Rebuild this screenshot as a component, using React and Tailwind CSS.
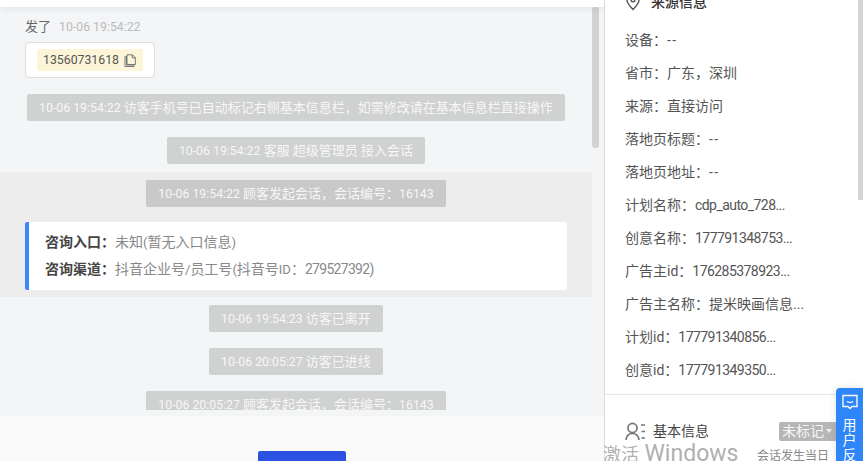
// App.jsx - chat session view with visitor source panel
const fontStack = { fontFamily: 'Roboto, "Noto Sans CJK SC", sans-serif' }

const sourceRows = [
  ['设备：', '--'],
  ['省市：', '广东，深圳'],
  ['来源：', '直接访问'],
  ['落地页标题：', '--'],
  ['落地页地址：', '--'],
  ['计划名称：', 'cdp_auto_728...'],
  ['创意名称：', '177791348753...'],
  ['广告主id：', '176285378923...'],
  ['广告主名称：', '提米映画信息...'],
  ['计划id：', '177791340856...'],
  ['创意id：', '177791349350...'],
]

// latin runs render a little narrower than the cjk text around them
function Num({ children }) {
  return <span className="text-[12.3px]">{children}</span>
}

function SystemPill({ time, children, dark }) {
  return (
    <div className={`h-[27px] leading-[27px] px-3 rounded-[2px] text-[13px] text-[#f7f7f7] whitespace-nowrap ${dark ? 'bg-[#c9c9c9]' : 'bg-[#d0d1d1]'}`}>
      <Num>{time}</Num> {children}
    </div>
  )
}

function CopyIcon() {
  return (
    <svg width="13" height="13" viewBox="0 0 13 13" fill="none" stroke="#777" strokeWidth="1">
      <path d="M1 2.5h1.5V11H10v1.5H1z" />
      <path d="M3 .8h5.5l2.8 2.8V10.5H3z" />
      <path d="M8.2 1v2.8h3" />
    </svg>
  )
}

function PinIcon() {
  return (
    <svg width="14" height="18" viewBox="0 0 14 18" fill="none" stroke="#555" strokeWidth="1.4">
      <path d="M7 16.5C4 13.5 1 10.5 1 7a6 6 0 0 1 12 0c0 3.5-3 6.500-6 9.500z" />
      <circle cx="7" cy="6.800" r="2" />
    </svg>
  )
}

function UserListIcon() {
  return (
    <svg width="20" height="19" viewBox="0 0 20 19" fill="none" stroke="#777" strokeWidth="1.700">
      <circle cx="7.500" cy="6" r="4.600" />
      <path d="M1 18c.4-4 3-6.500 6.500-6.500S13.500 14 14 18" />
      <path d="M16 3h4M16.500 9.500h3.500M16.500 16h3.500" />
    </svg>
  )
}

function FeedbackIcon() {
  return (
    <svg width="16" height="16" viewBox="0 0 16 16" fill="none" stroke="#fff" strokeWidth="1.300">
      <path d="M1 1.500h14v11H10l-2 2-2-2H1z" />
      <path d="M5 7.500c1.500 1 4.500 1 6 0" />
    </svg>
  )
}

export default function App() {
  return (
    <div className="relative flex w-[863px] h-[461px] overflow-hidden bg-white" style={fontStack}>
      {/* chat column */}
      <div className="flex flex-col w-[604px] shrink-0">
        <div className="h-[7px] bg-white shadow-[0_2px_6px_rgba(0,0,0,0.08)] z-10" />
        <div className="relative h-[403px] bg-[#f4f5f7] overflow-hidden">
          <div className="w-[592px]">
            <div className="flex items-center gap-2 pl-[25px] pt-[11px] h-[28px] text-[13px] leading-[18px]">
              <span className="text-[#666]">发了</span>
              <span className="text-[#bbb]"><Num>10-06 19:54:22</Num></span>
            </div>
            <div className="ml-[25px] mt-[7px] w-[130px] h-[36px] flex items-center justify-center bg-white border border-[#ddd] rounded-[4px]">
              <div className="flex items-center gap-[5px] h-[22px] px-[6px] bg-[#fdf5d8] text-[#555]">
                <Num>13560731618</Num>
                <CopyIcon />
              </div>
            </div>
            <div className="flex flex-col items-center gap-4 mt-[16px]">
              <SystemPill time="10-06 19:54:22">访客手机号已自动标记右侧基本信息栏，如需修改请在基本信息栏直接操作</SystemPill>
              <SystemPill time="10-06 19:54:22">客服 超级管理员 接入会话</SystemPill>
            </div>
            {/* highlighted session start */}
            <div className="mt-[8px] h-[125px] bg-[#ededed] pt-[8px] flex flex-col items-center">
              <SystemPill dark time="10-06 19:54:22">顾客发起会话，会话编号：<Num>16143</Num></SystemPill>
              <div className="mt-[15px] ml-[25px] mr-[25px] self-stretch h-[68px] bg-white rounded-[2px] border-l-4 border-[#3f87f5] pl-4 pt-[7px] text-[14px] leading-[27px]">
                <div><span className="font-semibold text-[#444]">咨询入口：</span><span className="text-[#888]">未知<span className="text-[13px]">(</span>暂无入口信息<span className="text-[13px]">)</span></span></div>
                <div><span className="font-semibold text-[#444]">咨询渠道：</span><span className="text-[#888]">抖音企业号<span className="text-[13px]">/</span>员工号<span className="text-[13px]">(</span>抖音号<span className="text-[13px]">ID</span>：<span className="text-[14px] tracking-[-0.7px]">279527392)</span></span></div>
              </div>
            </div>
            <div className="flex flex-col items-center gap-4 mt-[8px]">
              <SystemPill time="10-06 19:54:23">访客已离开</SystemPill>
              <SystemPill time="10-06 20:05:27">访客已进线</SystemPill>
              <SystemPill time="10-06 20:05:27">顾客发起会话，会话编号：<Num>16143</Num></SystemPill>
            </div>
          </div>
          {/* scrollbar */}
          <div className="absolute left-[592px] top-0 w-[7px] h-[141px] bg-[#d2d2d2] rounded-[3px]" />
        </div>
        <div className="h-[6px] bg-[#f4f5f7]" />
        <div className="flex-1 bg-[#fafafb] flex justify-center pt-[35px] overflow-hidden">
          <div className="w-[88px] h-[20px] shrink-0 bg-[#2b52e3] rounded-[2px]" />
        </div>
      </div>

      {/* source panel */}
      <div className="flex-1 min-w-0 border-l border-[#ddd] overflow-hidden">
        <div className="flex items-center gap-[11px] pl-[21px] -mt-[8px] h-[20px] text-[14px] text-[#333]">
          <PinIcon />
          <span className="font-medium">来源信息</span>
        </div>
        <div className="mt-[12px] pl-[20px] text-[14px] leading-[33px] text-[#555]">
          {sourceRows.map(([label, value]) => (
            <div key={label} className="h-[33px] whitespace-nowrap">
              {label}
              <span className={value === '--' ? 'tracking-[1.5px]' : /^[\x00-\x7f]+$/.test(value) ? 'tracking-[-0.55px]' : ''}>{value}</span>
            </div>
          ))}
        </div>
        <div className="mt-[7px] w-[253px] border-t border-[#e6e6e6]" />
        <div className="flex items-center mt-[26px] pl-[20px] w-[232px] h-[20px]">
          <UserListIcon />
          <span className="ml-[8px] text-[14px] text-[#444]">基本信息</span>
          <div className="ml-auto w-[58px] h-[19px] rounded-[2px] bg-[#b6b6b6] text-[14px] leading-[19px] text-[#f5f5f5] pl-[3px] flex items-center gap-[2px] whitespace-nowrap">
            未标记
            <span className="w-0 h-0 border-x-[3.500px] border-x-transparent border-t-[4px] border-t-[#eee]" />
          </div>
        </div>
        <div className="mt-[7px] pl-[152px] text-[12px] leading-[16px] text-[#888] whitespace-nowrap">会话发生当日</div>
      </div>

      {/* panel scrollbar */}
      <div className="absolute right-0 top-0 w-[5px] h-[200px] bg-[#d4d4d4]" />

      {/* feedback tab */}
      <div className="absolute left-[836px] top-[388px] w-[27px] h-[90px] bg-[#2f86f8] rounded-tl-[4px] flex flex-col items-center pt-[6px] shadow-[0_0_8px_rgba(0,0,0,0.12)]">
        <FeedbackIcon />
        <div className="w-[14px] mt-[8px] text-[14px] leading-[15px] text-white">用户反馈</div>
      </div>

      {/* windows activation watermark */}
      <div className="absolute left-[603px] top-[441px] text-[18px] leading-[26px] text-[#9a9a9a]/80 whitespace-nowrap">激活 <span className="text-[23px] ml-[1px]">Windows</span></div>
    </div>
  )
}
